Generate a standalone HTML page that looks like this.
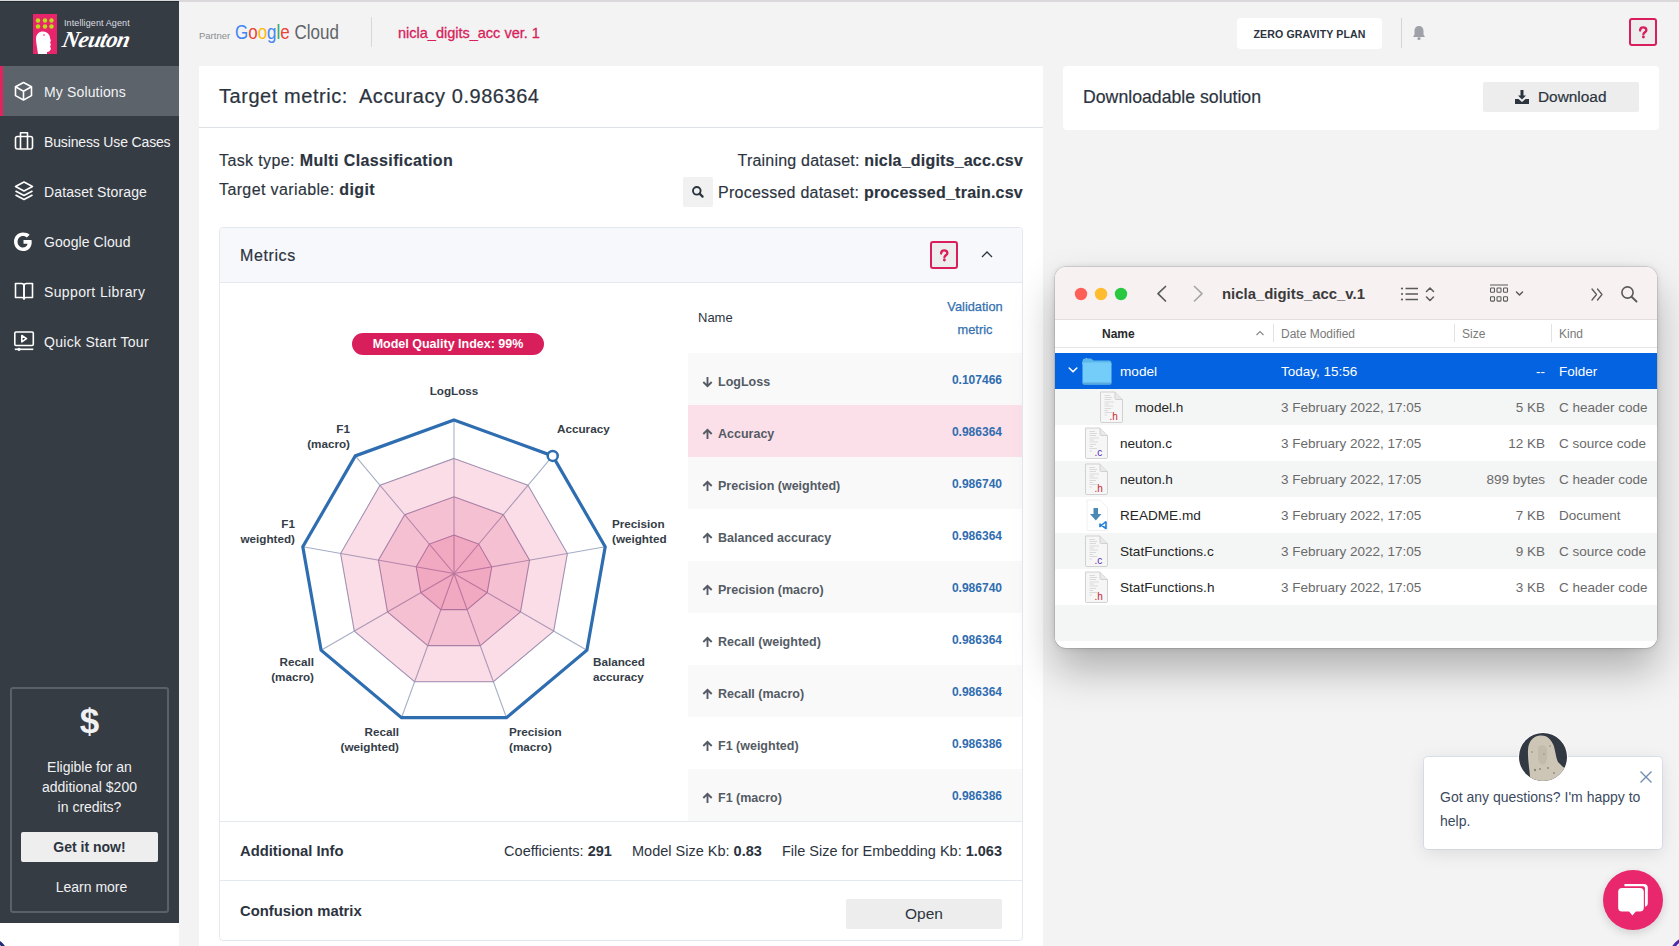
<!DOCTYPE html>
<html><head><meta charset="utf-8">
<style>
*{box-sizing:border-box;margin:0;padding:0}
html,body{width:1679px;height:946px;overflow:hidden;background:#f3f3f3;font-family:"Liberation Sans",sans-serif;color:#2c3440}
.a{position:absolute;white-space:nowrap}
#topstrip{left:0;top:0;width:1679px;height:2px;background:#dbd8dc}
#side{left:0;top:1px;width:179px;height:922px;background:#363c44;border-top:1px solid #222a32}
#sidebot{left:0;top:923px;width:179px;height:23px;background:#fff}
.nav{position:absolute;left:0;width:179px;height:50px;color:#f2f3f4;font-size:14px}
.nav .t{position:absolute;left:44px;top:17.5px;white-space:nowrap}
.nav svg{position:absolute;left:0;top:0}
.nav.act{background:#5c636b}
.nav.act:before{content:"";position:absolute;left:0;top:0;width:3px;height:50px;background:#e0245e}
#credit{left:10px;top:687px;width:159px;height:226px;border:2px solid #5b6168;border-radius:3px;color:#f0f1f2;text-align:center}
#card{left:199px;top:66px;width:844px;height:880px;background:#fff}
#card2{left:1063px;top:66px;width:596px;height:64px;background:#fff;border-radius:4px}
</style></head><body>
<div id="topstrip" class="a"></div>
<div id="side" class="a">
</div>
<div id="sidebot" class="a"></div>

<!-- logo -->
<div class="a" style="left:33px;top:14px;width:24px;height:40px;background:#e8246a"></div>
<svg class="a" style="left:33px;top:14px" width="24" height="40" viewBox="0 0 24 40">
  <g fill="#b7e01a">
    <circle cx="5" cy="6.5" r="2.2"/><circle cx="12" cy="6.5" r="2.2"/><circle cx="18.5" cy="6.5" r="2.2"/>
    <circle cx="5" cy="12.5" r="2.2"/><circle cx="12" cy="12.5" r="2.2"/><circle cx="18.5" cy="12.5" r="2.2"/>
  </g>
  <path d="M5 40 C4 33 3 28 3 25 C3 20 6 17.5 10 17.5 C14 17.5 17 20.5 17 24 L18 27 L17 28 L18 31 L17 32 L18 35 C17 37 16 38 14 38 L14 40 Z" fill="#fff"/>
  <circle cx="11" cy="21" r="0.8" fill="#e8246a"/>
</svg>
<div class="a" style="left:64px;top:18px;font-size:9px;color:#dcdde0;letter-spacing:0.1px">Intelligent Agent</div>
<div class="a" style="left:60px;top:27px;font-size:23px;color:#fff;font-family:'Liberation Serif',serif;font-style:italic;font-weight:bold;letter-spacing:-0.6px;transform:skewX(-12deg);transform-origin:0 100%">Neuton</div>

<!-- nav -->
<div class="nav act" style="top:66px">
  <svg width="40" height="50"><g fill="none" stroke="#fff" stroke-width="1.6" stroke-linejoin="round"><path d="M23.5 16.5 L31.5 20.8 L31.5 29.6 L23.5 34 L15.5 29.6 L15.5 20.8 Z"/><path d="M15.5 20.8 L23.5 25.2 L31.5 20.8 M23.5 25.2 L23.5 34"/></g></svg>
  <span class="t" style="letter-spacing:0.15px">My Solutions</span></div>
<div class="nav" style="top:116px">
  <svg width="40" height="50"><g fill="none" stroke="#fff" stroke-width="1.6" stroke-linejoin="round"><rect x="15.5" y="20.5" width="17" height="12.5" rx="2"/><path d="M20.5 20.5 V16.8 H27.5 V20.5 M20.5 20.5 V33 M27.5 20.5 V33"/></g></svg>
  <span class="t" style="letter-spacing:-0.15px">Business Use Cases</span></div>
<div class="nav" style="top:166px">
  <svg width="40" height="50"><g fill="none" stroke="#fff" stroke-width="1.6" stroke-linejoin="round"><path d="M15.5 20.5 L24 16 L32.5 20.5 L24 25 Z"/><path d="M15.5 25 L24 29.5 L32.5 25 M15.5 29 L24 33.5 L32.5 29"/></g></svg>
  <span class="t" style="letter-spacing:0.12px">Dataset Storage</span></div>
<div class="nav" style="top:216px">
  <svg width="40" height="50"><path d="M31.5 24 H23.5 V27.8 H27.6 C27 30.3 25.3 31.6 23 31.6 C19.8 31.6 17.6 29 17.6 25.8 C17.6 22.6 19.8 20.1 23 20.1 C24.6 20.1 25.9 20.7 26.9 21.6 L29.7 18.8 C28 17.3 25.8 16.5 23 16.5 C17.8 16.5 14 20.7 14 25.8 C14 30.9 17.8 35.1 23 35.1 C28.3 35.1 31.7 31.4 31.7 26.2 C31.7 25.4 31.6 24.7 31.5 24 Z" fill="#fff"/></svg>
  <span class="t" style="letter-spacing:0.08px">Google Cloud</span></div>
<div class="nav" style="top:266px">
  <svg width="40" height="50"><g fill="none" stroke="#fff" stroke-width="1.6" stroke-linejoin="round"><path d="M15.5 17.5 H21.5 C22.8 17.5 24 18.5 24 19.8 V33 C24 32 23 31.5 22 31.5 H15.5 Z"/><path d="M32.5 17.5 H26.5 C25.2 17.5 24 18.5 24 19.8 V33 C24 32 25 31.5 26 31.5 H32.5 Z"/></g></svg>
  <span class="t" style="letter-spacing:0.37px">Support Library</span></div>
<div class="nav" style="top:316px">
  <svg width="40" height="50"><g fill="none" stroke="#fff" stroke-width="1.6" stroke-linejoin="round"><rect x="14.8" y="16" width="18.5" height="13.5" rx="1.2"/><path d="M21.8 19.5 L26.5 22.7 L21.8 25.9 Z"/><path d="M14.8 33.3 H33.3"/></g><circle cx="19" cy="33.3" r="1.6" fill="#fff"/></svg>
  <span class="t" style="letter-spacing:0.3px">Quick Start Tour</span></div>

<!-- credits -->
<div id="credit" class="a">
  <div style="position:absolute;left:0;width:155px;top:14px;font-size:35px;font-weight:bold;line-height:36px">$</div>
  <div style="position:absolute;left:0;width:155px;top:68px;font-size:14px;line-height:20px">Eligible for an<br>additional $200<br>in credits?</div>
  <div style="position:absolute;left:9px;top:143px;width:137px;height:30px;background:#eeeeee;border-radius:2px;color:#2c3440;font-weight:bold;font-size:14px;line-height:30px">Get it now!</div>
  <div style="position:absolute;left:0;width:159px;top:188px;font-size:14px;line-height:20px">Learn more</div>
</div>

<!-- header -->
<div class="a" style="left:199px;top:30px;font-size:9.5px;color:#8a8d91">Partner</div>
<div class="a" style="left:235px;top:20px;font-size:19.5px;line-height:24px;transform:scaleX(0.87);transform-origin:0 0"><span style="color:#4285f4">G</span><span style="color:#ea4335">o</span><span style="color:#fbbc05">o</span><span style="color:#4285f4">g</span><span style="color:#34a853">l</span><span style="color:#ea4335">e</span> <span style="color:#5f6368">Cloud</span></div>
<div class="a" style="left:371px;top:17px;width:1px;height:30px;background:#d8d8d8"></div>
<div class="a" style="left:398px;top:25px;font-size:14.5px;color:#d81e5b;-webkit-text-stroke:0.3px #d81e5b">nicla_digits_acc ver. 1</div>

<div class="a" style="left:1237px;top:18px;width:145px;height:31px;background:#fff;border-radius:4px;font-size:10.6px;font-weight:bold;color:#2c3440;text-align:center;line-height:33px;letter-spacing:0.1px">ZERO GRAVITY PLAN</div>
<div class="a" style="left:1401px;top:18px;width:1px;height:30px;background:#d5d5d5"></div>
<svg class="a" style="left:1410px;top:24px" width="18" height="18" viewBox="0 0 18 18"><path d="M9 2 C6 2 4.5 4.3 4.5 7 V10.5 L3 13 H15 L13.5 10.5 V7 C13.5 4.3 12 2 9 2 Z" fill="#9ea2a8"/><circle cx="9" cy="14.5" r="1.6" fill="#9ea2a8"/></svg>
<div class="a" style="left:1629px;top:18px;width:28px;height:28px;border:2px solid #d81e5b;border-radius:3px;background:#ededed"><svg width="24" height="24" style="position:absolute;left:0;top:0"><g transform="translate(12,12.4) scale(0.8)"><path d="M-3.6 -2.3 C-3.6 -4.9 -1.9 -6.2 0.3 -6.2 C2.6 -6.2 4.2 -4.8 4.2 -2.8 C4.2 -0.5 0.7 0 0.5 2.3" fill="none" stroke="#d81e5b" stroke-width="2.9" stroke-linecap="round"/><circle cx="0.5" cy="5.8" r="1.8" fill="#d81e5b"/></g></svg></div>

<div id="card" class="a"></div>
<div id="card2" class="a">
  <div class="a" style="left:20px;top:21px;font-size:17.7px;color:#2c3440;-webkit-text-stroke:0.2px #2c3440">Downloadable solution</div>
  <div class="a" style="left:420px;top:16px;width:156px;height:30px;background:#ededed;border-radius:2px"></div>
  <svg class="a" style="left:450px;top:22px" width="18" height="18" viewBox="0 0 18 18"><path d="M7.5 2 H10.5 V7.5 H13 L9 11.5 L5 7.5 H7.5 Z" fill="#2c3440"/><path d="M2 11 H5.5 L9 14 L12.5 11 H16 V16 H2 Z" fill="#2c3440"/></svg>
  <div class="a" style="left:475px;top:22px;font-size:15.4px;color:#2c3440;-webkit-text-stroke:0.2px #2c3440">Download</div>
</div>

<!--MAIN-->
<div class="a" style="left:219px;top:86px;font-size:20px;line-height:20px;letter-spacing:0.55px;color:#2c3440;-webkit-text-stroke:0.2px #2c3440">Target metric:&nbsp; Accuracy 0.986364</div>
<div class="a" style="left:199px;top:127px;width:844px;height:1px;background:#dde1e6"></div>
<div class="a" style="left:219px;top:153px;font-size:16px;line-height:16px;letter-spacing:0.38px;-webkit-text-stroke:0.15px #2c3440">Task type: <b>Multi Classification</b></div>
<div class="a" style="left:219px;top:182px;font-size:16px;line-height:16px;letter-spacing:0.38px;-webkit-text-stroke:0.15px #2c3440">Target variable: <b>digit</b></div>
<div class="a" style="right:656px;top:153px;font-size:16px;line-height:16px;letter-spacing:0.2px;text-align:right;-webkit-text-stroke:0.15px #2c3440">Training dataset: <b>nicla_digits_acc.csv</b></div>
<div class="a" style="right:656px;top:185px;font-size:16px;line-height:16px;letter-spacing:0.23px;text-align:right;-webkit-text-stroke:0.15px #2c3440">Processed dataset: <b>processed_train.csv</b></div>
<div class="a" style="left:683px;top:177px;width:30px;height:30px;background:#f1f1f1;border-radius:2px"></div>
<svg class="a" style="left:683px;top:177px" width="30" height="30"><circle cx="13.8" cy="13.8" r="3.8" fill="none" stroke="#2c3440" stroke-width="1.9"/><path d="M16.6 16.6 L19.6 19.6" stroke="#2c3440" stroke-width="2.2" stroke-linecap="round"/></svg>
<div class="a" style="left:219px;top:227px;width:804px;height:714px;border:1px solid #e4e8ef;border-radius:4px;background:#fff"></div>
<div class="a" style="left:220px;top:228px;width:802px;height:55px;background:#f7f8fb;border-bottom:1px solid #e4e8ef;border-radius:3px 3px 0 0"></div>
<div class="a" style="left:240px;top:248px;font-size:16px;line-height:16px;letter-spacing:0.6px;-webkit-text-stroke:0.2px #2c3440">Metrics</div>
<div class="a" style="left:930px;top:240.5px;width:28px;height:28px;border:2px solid #d81e5b;border-radius:3px;background:#ededed"><svg width="24" height="24" style="position:absolute;left:0;top:0"><g transform="translate(12,12.4) scale(0.8)"><path d="M-3.6 -2.3 C-3.6 -4.9 -1.9 -6.2 0.3 -6.2 C2.6 -6.2 4.2 -4.8 4.2 -2.8 C4.2 -0.5 0.7 0 0.5 2.3" fill="none" stroke="#d81e5b" stroke-width="2.9" stroke-linecap="round"/><circle cx="0.5" cy="5.8" r="1.8" fill="#d81e5b"/></g></svg></div>
<svg class="a" style="left:979px;top:246px" width="16" height="16"><path d="M3 11 L8 6 L13 11" fill="none" stroke="#2c3440" stroke-width="1.3"/></svg>
<div class="a" style="left:352px;top:333px;width:192px;height:22px;background:#d81e5b;border-radius:11px;color:#fff;font-weight:bold;font-size:12.5px;line-height:22px;text-align:center">Model Quality Index: 99%</div>
<svg class="a" style="left:0;top:0" width="1043" height="946" viewBox="0 0 1043 946">
<polygon points="454.0,420.0 552.7,455.9 605.2,546.8 586.9,650.2 506.5,717.7 401.5,717.7 321.1,650.2 302.8,546.8 355.3,455.9" fill="none" stroke="#a3adc4" stroke-width="1.05"/>
<polygon points="454.0,458.4 528.0,485.3 567.4,553.5 553.7,631.1 493.4,681.7 414.6,681.7 354.3,631.1 340.6,553.5 380.0,485.3" fill="none" stroke="#a3adc4" stroke-width="1.05"/>
<polygon points="454.0,496.8 503.3,514.7 529.6,560.2 520.5,611.9 480.3,645.6 427.7,645.6 387.5,611.9 378.4,560.2 404.7,514.7" fill="none" stroke="#a3adc4" stroke-width="1.05"/>
<polygon points="454.0,535.1 478.7,544.1 491.8,566.8 487.2,592.7 467.1,609.6 440.9,609.6 420.8,592.7 416.2,566.8 429.3,544.1" fill="none" stroke="#a3adc4" stroke-width="1.05"/>
<line x1="454" y1="573.5" x2="454.0" y2="420.0" stroke="#a3adc4" stroke-width="1.05"/>
<line x1="454" y1="573.5" x2="552.7" y2="455.9" stroke="#a3adc4" stroke-width="1.05"/>
<line x1="454" y1="573.5" x2="605.2" y2="546.8" stroke="#a3adc4" stroke-width="1.05"/>
<line x1="454" y1="573.5" x2="586.9" y2="650.2" stroke="#a3adc4" stroke-width="1.05"/>
<line x1="454" y1="573.5" x2="506.5" y2="717.7" stroke="#a3adc4" stroke-width="1.05"/>
<line x1="454" y1="573.5" x2="401.5" y2="717.7" stroke="#a3adc4" stroke-width="1.05"/>
<line x1="454" y1="573.5" x2="321.1" y2="650.2" stroke="#a3adc4" stroke-width="1.05"/>
<line x1="454" y1="573.5" x2="302.8" y2="546.8" stroke="#a3adc4" stroke-width="1.05"/>
<line x1="454" y1="573.5" x2="355.3" y2="455.9" stroke="#a3adc4" stroke-width="1.05"/>
<polygon points="454.0,458.4 528.0,485.3 567.4,553.5 553.7,631.1 493.4,681.7 414.6,681.7 354.3,631.1 340.6,553.5 380.0,485.3" fill="rgba(222,40,105,0.155)" stroke="rgba(150,60,130,0.18)" stroke-width="1"/>
<polygon points="454.0,496.8 503.3,514.7 529.6,560.2 520.5,611.9 480.3,645.6 427.7,645.6 387.5,611.9 378.4,560.2 404.7,514.7" fill="rgba(222,40,105,0.155)" stroke="rgba(150,60,130,0.18)" stroke-width="1"/>
<polygon points="454.0,535.1 478.7,544.1 491.8,566.8 487.2,592.7 467.1,609.6 440.9,609.6 420.8,592.7 416.2,566.8 429.3,544.1" fill="rgba(222,40,105,0.155)" stroke="rgba(150,60,130,0.18)" stroke-width="1"/>
<polygon points="454.0,420.0 552.7,455.9 605.2,546.8 586.9,650.2 506.5,717.7 401.5,717.7 321.1,650.2 302.8,546.8 355.3,455.9" fill="none" stroke="#2e6db0" stroke-width="3.2" stroke-linejoin="miter"/>
<circle cx="552.7" cy="455.9" r="5" fill="#fff" stroke="#2e6db0" stroke-width="2.5"/>
</svg>
<div class="a" style="left:404px;width:100px;top:384px;text-align:center;font-size:11.7px;font-weight:bold;color:#353d48;line-height:14.5px">LogLoss</div>
<div class="a" style="left:557px;top:422px;font-size:11.7px;font-weight:bold;color:#353d48;line-height:14.5px">Accuracy</div>
<div class="a" style="left:612px;top:517px;font-size:11.7px;font-weight:bold;color:#353d48;line-height:14.5px">Precision<br>(weighted</div>
<div class="a" style="left:593px;top:655px;font-size:11.7px;font-weight:bold;color:#353d48;line-height:14.5px">Balanced<br>accuracy</div>
<div class="a" style="left:509px;top:725px;font-size:11.7px;font-weight:bold;color:#353d48;line-height:14.5px">Precision<br>(macro)</div>
<div class="a" style="right:1280px;top:725px;text-align:right;font-size:11.7px;font-weight:bold;color:#353d48;line-height:14.5px">Recall<br>(weighted)</div>
<div class="a" style="right:1365px;top:655px;text-align:right;font-size:11.7px;font-weight:bold;color:#353d48;line-height:14.5px">Recall<br>(macro)</div>
<div class="a" style="right:1384px;top:517px;text-align:right;font-size:11.7px;font-weight:bold;color:#353d48;line-height:14.5px">F1<br>weighted)</div>
<div class="a" style="right:1329px;top:422px;text-align:right;font-size:11.7px;font-weight:bold;color:#353d48;line-height:14.5px">F1<br>(macro)</div>
<div class="a" style="left:698px;top:311px;font-size:13px;line-height:13px;color:#2c3440">Name</div>
<div class="a" style="left:925px;width:100px;top:295px;font-size:12.8px;line-height:23px;color:#3470b0;text-align:center;-webkit-text-stroke:0.25px #3470b0">Validation<br>metric</div>
<div class="a" style="left:688px;top:353px;width:334px;height:52px;background:#f9f9fa"></div>
<div class="a" style="left:718px;top:375px;font-size:12.5px;line-height:14px;font-weight:bold;color:#545b64"><svg width="11" height="12" style="position:absolute;left:-16px;top:1px"><path d="M5.5 1 V10.2 M1.3 6 L5.5 10.2 L9.7 6" fill="none" stroke="#545b64" stroke-width="1.9" stroke-linejoin="miter"/></svg>LogLoss</div>
<div class="a" style="right:677px;top:373px;font-size:12px;line-height:14px;font-weight:bold;color:#2f6db0">0.107466</div>
<div class="a" style="left:688px;top:405px;width:334px;height:52px;background:#fce0e9"></div>
<div class="a" style="left:718px;top:427px;font-size:12.5px;line-height:14px;font-weight:bold;color:#545b64"><svg width="11" height="12" style="position:absolute;left:-16px;top:1px"><path d="M5.5 11 V1.8 M1.3 6 L5.5 1.8 L9.7 6" fill="none" stroke="#545b64" stroke-width="1.9" stroke-linejoin="miter"/></svg>Accuracy</div>
<div class="a" style="right:677px;top:425px;font-size:12px;line-height:14px;font-weight:bold;color:#2f6db0">0.986364</div>
<div class="a" style="left:688px;top:457px;width:334px;height:52px;background:#f9f9fa"></div>
<div class="a" style="left:718px;top:479px;font-size:12.5px;line-height:14px;font-weight:bold;color:#545b64"><svg width="11" height="12" style="position:absolute;left:-16px;top:1px"><path d="M5.5 11 V1.8 M1.3 6 L5.5 1.8 L9.7 6" fill="none" stroke="#545b64" stroke-width="1.9" stroke-linejoin="miter"/></svg>Precision (weighted)</div>
<div class="a" style="right:677px;top:477px;font-size:12px;line-height:14px;font-weight:bold;color:#2f6db0">0.986740</div>
<div class="a" style="left:688px;top:509px;width:334px;height:52px;background:#ffffff"></div>
<div class="a" style="left:718px;top:531px;font-size:12.5px;line-height:14px;font-weight:bold;color:#545b64"><svg width="11" height="12" style="position:absolute;left:-16px;top:1px"><path d="M5.5 11 V1.8 M1.3 6 L5.5 1.8 L9.7 6" fill="none" stroke="#545b64" stroke-width="1.9" stroke-linejoin="miter"/></svg>Balanced accuracy</div>
<div class="a" style="right:677px;top:529px;font-size:12px;line-height:14px;font-weight:bold;color:#2f6db0">0.986364</div>
<div class="a" style="left:688px;top:561px;width:334px;height:52px;background:#f9f9fa"></div>
<div class="a" style="left:718px;top:583px;font-size:12.5px;line-height:14px;font-weight:bold;color:#545b64"><svg width="11" height="12" style="position:absolute;left:-16px;top:1px"><path d="M5.5 11 V1.8 M1.3 6 L5.5 1.8 L9.7 6" fill="none" stroke="#545b64" stroke-width="1.9" stroke-linejoin="miter"/></svg>Precision (macro)</div>
<div class="a" style="right:677px;top:581px;font-size:12px;line-height:14px;font-weight:bold;color:#2f6db0">0.986740</div>
<div class="a" style="left:688px;top:613px;width:334px;height:52px;background:#ffffff"></div>
<div class="a" style="left:718px;top:635px;font-size:12.5px;line-height:14px;font-weight:bold;color:#545b64"><svg width="11" height="12" style="position:absolute;left:-16px;top:1px"><path d="M5.5 11 V1.8 M1.3 6 L5.5 1.8 L9.7 6" fill="none" stroke="#545b64" stroke-width="1.9" stroke-linejoin="miter"/></svg>Recall (weighted)</div>
<div class="a" style="right:677px;top:633px;font-size:12px;line-height:14px;font-weight:bold;color:#2f6db0">0.986364</div>
<div class="a" style="left:688px;top:665px;width:334px;height:52px;background:#f9f9fa"></div>
<div class="a" style="left:718px;top:687px;font-size:12.5px;line-height:14px;font-weight:bold;color:#545b64"><svg width="11" height="12" style="position:absolute;left:-16px;top:1px"><path d="M5.5 11 V1.8 M1.3 6 L5.5 1.8 L9.7 6" fill="none" stroke="#545b64" stroke-width="1.9" stroke-linejoin="miter"/></svg>Recall (macro)</div>
<div class="a" style="right:677px;top:685px;font-size:12px;line-height:14px;font-weight:bold;color:#2f6db0">0.986364</div>
<div class="a" style="left:688px;top:717px;width:334px;height:52px;background:#ffffff"></div>
<div class="a" style="left:718px;top:739px;font-size:12.5px;line-height:14px;font-weight:bold;color:#545b64"><svg width="11" height="12" style="position:absolute;left:-16px;top:1px"><path d="M5.5 11 V1.8 M1.3 6 L5.5 1.8 L9.7 6" fill="none" stroke="#545b64" stroke-width="1.9" stroke-linejoin="miter"/></svg>F1 (weighted)</div>
<div class="a" style="right:677px;top:737px;font-size:12px;line-height:14px;font-weight:bold;color:#2f6db0">0.986386</div>
<div class="a" style="left:688px;top:769px;width:334px;height:52px;background:#f9f9fa"></div>
<div class="a" style="left:718px;top:791px;font-size:12.5px;line-height:14px;font-weight:bold;color:#545b64"><svg width="11" height="12" style="position:absolute;left:-16px;top:1px"><path d="M5.5 11 V1.8 M1.3 6 L5.5 1.8 L9.7 6" fill="none" stroke="#545b64" stroke-width="1.9" stroke-linejoin="miter"/></svg>F1 (macro)</div>
<div class="a" style="right:677px;top:789px;font-size:12px;line-height:14px;font-weight:bold;color:#2f6db0">0.986386</div>
<div class="a" style="left:220px;top:821px;width:802px;height:1px;background:#e4e8ef"></div>
<div class="a" style="left:220px;top:880px;width:802px;height:1px;background:#e4e8ef"></div>
<div class="a" style="left:240px;top:843px;font-size:14.8px;line-height:16px;font-weight:bold">Additional Info</div>
<div class="a" style="right:677px;top:843px;font-size:14.5px;line-height:16px;word-spacing:0px">Coefficients: <b>291</b>&nbsp;&nbsp;&nbsp;&nbsp; Model Size Kb: <b>0.83</b>&nbsp;&nbsp;&nbsp;&nbsp; File Size for Embedding Kb: <b>1.063</b></div>
<div class="a" style="left:240px;top:903px;font-size:14.8px;line-height:16px;font-weight:bold">Confusion matrix</div>
<div class="a" style="left:846px;top:899px;width:156px;height:30px;background:#ededed;border-radius:2px;font-size:15.5px;line-height:30px;text-align:center">Open</div>
<!--FINDER-->
<div class="a" style="left:1055px;top:267px;width:602px;height:381px;border-radius:11px;background:#fff;box-shadow:0 0 0 0.5px rgba(0,0,0,0.2),0 0 6px rgba(0,0,0,0.12),0 22px 40px rgba(0,0,0,0.28);overflow:hidden">
<div class="a" style="left:0;top:0;width:602px;height:53px;background:#f7f1f2;border-bottom:1px solid #e3dfe0"></div>
<svg class="a" style="left:0;top:0" width="602" height="53"><circle cx="26" cy="27" r="6.2" fill="#fe5f57"/><circle cx="46" cy="27" r="6.2" fill="#febc2e"/><circle cx="66" cy="27" r="6.2" fill="#28c840"/><path d="M110.5 19.5 L103 26.7 L110.5 34" fill="none" stroke="#5a5a5a" stroke-width="1.7" stroke-linecap="round" stroke-linejoin="round"/><path d="M139.5 19.5 L147 26.7 L139.5 34" fill="none" stroke="#a8a8a8" stroke-width="1.7" stroke-linecap="round" stroke-linejoin="round"/><g fill="#5a5a5a"><circle cx="347" cy="21.5" r="1.1"/><circle cx="347" cy="27" r="1.1"/><circle cx="347" cy="32.5" r="1.1"/></g><path d="M350.5 21.5 H363 M350.5 27 H363 M350.5 32.5 H363" stroke="#5a5a5a" stroke-width="1.4"/><path d="M371.5 24.5 L375 21 L378.5 24.5 M371.5 30 L375 33.5 L378.5 30" fill="none" stroke="#5a5a5a" stroke-width="1.5" stroke-linecap="round" stroke-linejoin="round"/><path d="M435 18 H453" stroke="#5a5a5a" stroke-width="1.2"/><g fill="none" stroke="#5a5a5a" stroke-width="1.1"><rect x="435.5" y="21" width="4" height="4.3" rx="0.8"/><rect x="442" y="21" width="4" height="4.3" rx="0.8"/><rect x="448.5" y="21" width="4" height="4.3" rx="0.8"/><rect x="435.5" y="29.8" width="4" height="4.3" rx="0.8"/><rect x="442" y="29.8" width="4" height="4.3" rx="0.8"/><rect x="448.5" y="29.8" width="4" height="4.3" rx="0.8"/></g><path d="M461.5 25 L464.5 28 L467.5 25" fill="none" stroke="#5a5a5a" stroke-width="1.5" stroke-linecap="round" stroke-linejoin="round"/><path d="M537 22 L541.5 27.5 L537 33 M542.5 22 L547 27.5 L542.5 33" fill="none" stroke="#5a5a5a" stroke-width="1.3" stroke-linecap="round" stroke-linejoin="round"/><circle cx="572.5" cy="25.5" r="5.6" fill="none" stroke="#5a5a5a" stroke-width="1.6"/><path d="M576.6 29.8 L581.5 34.5" stroke="#5a5a5a" stroke-width="1.9" stroke-linecap="round"/></svg>
<div class="a" style="left:167px;top:19px;font-size:14.9px;font-weight:bold;color:#3b3b3b;line-height:16px">nicla_digits_acc_v.1</div>
<div class="a" style="left:0;top:80px;width:602px;height:1px;background:#e6e6e6"></div>
<div class="a" style="left:47px;top:60px;font-size:12px;font-weight:bold;color:#2a2a2a;line-height:14px">Name</div>
<svg class="a" style="left:199px;top:61px" width="12" height="10"><path d="M2.5 7 L6 3.5 L9.5 7" fill="none" stroke="#8a8a8a" stroke-width="1.2"/></svg>
<div class="a" style="left:218px;top:57px;width:1px;height:18px;background:#e2e2e2"></div>
<div class="a" style="left:399px;top:57px;width:1px;height:18px;background:#e2e2e2"></div>
<div class="a" style="left:496px;top:57px;width:1px;height:18px;background:#e2e2e2"></div>
<div class="a" style="left:226px;top:60px;font-size:12px;color:#7a7a7a;line-height:14px">Date Modified</div>
<div class="a" style="left:407px;top:60px;font-size:12px;color:#7a7a7a;line-height:14px">Size</div>
<div class="a" style="left:504px;top:60px;font-size:12px;color:#7a7a7a;line-height:14px">Kind</div>
<div class="a" style="left:0;top:86px;width:602px;height:36px;background:#0463e0"></div>
<svg class="a" style="left:14px;top:86px" width="60" height="36"><path d="M14 10 L17.5 6 L17.5 6" fill="none" stroke="#fff" stroke-width="1.6" stroke-linecap="round" stroke-linejoin="round" transform="translate(0,0)"/></svg>
<svg class="a" style="left:0;top:86px" width="60" height="36"><path d="M14.2 15 L18 18.8 L21.8 15" fill="none" stroke="#fff" stroke-width="1.6" stroke-linecap="round" stroke-linejoin="round"/><path d="M27.5 8 Q27.5 5.5 30 5.5 H36 L38.5 7.5 H54 Q56.5 7.5 56.5 10 V12 H27.5 Z" fill="#5bb6ea"/><rect x="27.5" y="9.5" width="29" height="22" rx="2.2" fill="#74cdf9"/><rect x="27.5" y="29.5" width="29" height="2" rx="1" fill="#5aa9de"/></svg>
<div class="a" style="left:65px;top:97px;font-size:13.6px;color:#fff;line-height:16px">model</div>
<div class="a" style="left:226px;top:97px;font-size:13.5px;color:#fff;line-height:16px">Today, 15:56</div>
<div class="a" style="right:112px;top:97px;font-size:13.5px;color:#fff;line-height:16px;text-align:right">--</div>
<div class="a" style="left:504px;top:97px;font-size:13.5px;color:#fff;line-height:16px">Folder</div>
<div class="a" style="left:0;top:122px;width:602px;height:36px;background:#f4f5f5"></div>
<svg class="a" style="left:44px;top:122px" width="30" height="36"><path d="M1.5 3 H16 L23.5 10.5 V32.2 Q23.5 33.5 22.2 33.5 H2.8 Q1.5 33.5 1.5 32.2 Z" fill="#f6f6f6" stroke="#cdcdcd" stroke-width="0.9"/><path d="M16 3 V9.3 Q16 10.5 17.2 10.5 H23.5" fill="#e9e9e9" stroke="#cdcdcd" stroke-width="0.9"/><g stroke="#cfcfcf" stroke-width="0.7"><path d="M5.5 6.5 H11 M5.5 8.5 H13 M5.5 10.5 H12 M5.5 13 H15 M5.5 15 H10 M5.5 17 H14 M5.5 19.5 H12 M5.5 21.5 H9 M5.5 23.5 H13 M5.5 26 H8"/></g><text x="10.5" y="30.5" font-family="Liberation Sans" font-size="10" font-weight="normal" fill="#c9252f">.h</text></svg>
<div class="a" style="left:80px;top:133px;font-size:13.6px;color:#262626;line-height:16px">model.h</div>
<div class="a" style="left:226px;top:133px;font-size:13.5px;color:#6a6a6a;line-height:16px">3 February 2022, 17:05</div>
<div class="a" style="right:112px;top:133px;font-size:13.5px;color:#6a6a6a;line-height:16px;text-align:right">5 KB</div>
<div class="a" style="left:504px;top:133px;font-size:13.5px;color:#6a6a6a;line-height:16px">C header code</div>
<div class="a" style="left:0;top:158px;width:602px;height:36px;background:#ffffff"></div>
<svg class="a" style="left:29px;top:158px" width="30" height="36"><path d="M1.5 3 H16 L23.5 10.5 V32.2 Q23.5 33.5 22.2 33.5 H2.8 Q1.5 33.5 1.5 32.2 Z" fill="#f6f6f6" stroke="#cdcdcd" stroke-width="0.9"/><path d="M16 3 V9.3 Q16 10.5 17.2 10.5 H23.5" fill="#e9e9e9" stroke="#cdcdcd" stroke-width="0.9"/><g stroke="#cfcfcf" stroke-width="0.7"><path d="M5.5 6.5 H11 M5.5 8.5 H13 M5.5 10.5 H12 M5.5 13 H15 M5.5 15 H10 M5.5 17 H14 M5.5 19.5 H12 M5.5 21.5 H9 M5.5 23.5 H13 M5.5 26 H8"/></g><text x="10.5" y="30.5" font-family="Liberation Sans" font-size="10" font-weight="normal" fill="#5b2fb5">.c</text></svg>
<div class="a" style="left:65px;top:169px;font-size:13.6px;color:#262626;line-height:16px">neuton.c</div>
<div class="a" style="left:226px;top:169px;font-size:13.5px;color:#6a6a6a;line-height:16px">3 February 2022, 17:05</div>
<div class="a" style="right:112px;top:169px;font-size:13.5px;color:#6a6a6a;line-height:16px;text-align:right">12 KB</div>
<div class="a" style="left:504px;top:169px;font-size:13.5px;color:#6a6a6a;line-height:16px">C source code</div>
<div class="a" style="left:0;top:194px;width:602px;height:36px;background:#f4f5f5"></div>
<svg class="a" style="left:29px;top:194px" width="30" height="36"><path d="M1.5 3 H16 L23.5 10.5 V32.2 Q23.5 33.5 22.2 33.5 H2.8 Q1.5 33.5 1.5 32.2 Z" fill="#f6f6f6" stroke="#cdcdcd" stroke-width="0.9"/><path d="M16 3 V9.3 Q16 10.5 17.2 10.5 H23.5" fill="#e9e9e9" stroke="#cdcdcd" stroke-width="0.9"/><g stroke="#cfcfcf" stroke-width="0.7"><path d="M5.5 6.5 H11 M5.5 8.5 H13 M5.5 10.5 H12 M5.5 13 H15 M5.5 15 H10 M5.5 17 H14 M5.5 19.5 H12 M5.5 21.5 H9 M5.5 23.5 H13 M5.5 26 H8"/></g><text x="10.5" y="30.5" font-family="Liberation Sans" font-size="10" font-weight="normal" fill="#c9252f">.h</text></svg>
<div class="a" style="left:65px;top:205px;font-size:13.6px;color:#262626;line-height:16px">neuton.h</div>
<div class="a" style="left:226px;top:205px;font-size:13.5px;color:#6a6a6a;line-height:16px">3 February 2022, 17:05</div>
<div class="a" style="right:112px;top:205px;font-size:13.5px;color:#6a6a6a;line-height:16px;text-align:right">899 bytes</div>
<div class="a" style="left:504px;top:205px;font-size:13.5px;color:#6a6a6a;line-height:16px">C header code</div>
<div class="a" style="left:0;top:230px;width:602px;height:36px;background:#ffffff"></div>
<svg class="a" style="left:29px;top:230px" width="30" height="36"><path d="M3 3 H16 L23.5 10.5 V33.5 H3 Z" fill="#fff" stroke="#ececec" stroke-width="0.8"/><path d="M9.5 11 H14 V17 H17.5 L11.8 23.5 L6 17 H9.5 Z" fill="#4a8ab5"/><path d="M22 24.5 V31.5 L15.5 26.8 M22 24.5 L15.5 30 M16 26.5 V30" fill="none" stroke="#1f7fd8" stroke-width="1.6" stroke-linejoin="round"/></svg>
<div class="a" style="left:65px;top:241px;font-size:13.6px;color:#262626;line-height:16px">README.md</div>
<div class="a" style="left:226px;top:241px;font-size:13.5px;color:#6a6a6a;line-height:16px">3 February 2022, 17:05</div>
<div class="a" style="right:112px;top:241px;font-size:13.5px;color:#6a6a6a;line-height:16px;text-align:right">7 KB</div>
<div class="a" style="left:504px;top:241px;font-size:13.5px;color:#6a6a6a;line-height:16px">Document</div>
<div class="a" style="left:0;top:266px;width:602px;height:36px;background:#f4f5f5"></div>
<svg class="a" style="left:29px;top:266px" width="30" height="36"><path d="M1.5 3 H16 L23.5 10.5 V32.2 Q23.5 33.5 22.2 33.5 H2.8 Q1.5 33.5 1.5 32.2 Z" fill="#f6f6f6" stroke="#cdcdcd" stroke-width="0.9"/><path d="M16 3 V9.3 Q16 10.5 17.2 10.5 H23.5" fill="#e9e9e9" stroke="#cdcdcd" stroke-width="0.9"/><g stroke="#cfcfcf" stroke-width="0.7"><path d="M5.5 6.5 H11 M5.5 8.5 H13 M5.5 10.5 H12 M5.5 13 H15 M5.5 15 H10 M5.5 17 H14 M5.5 19.5 H12 M5.5 21.5 H9 M5.5 23.5 H13 M5.5 26 H8"/></g><text x="10.5" y="30.5" font-family="Liberation Sans" font-size="10" font-weight="normal" fill="#5b2fb5">.c</text></svg>
<div class="a" style="left:65px;top:277px;font-size:13.6px;color:#262626;line-height:16px">StatFunctions.c</div>
<div class="a" style="left:226px;top:277px;font-size:13.5px;color:#6a6a6a;line-height:16px">3 February 2022, 17:05</div>
<div class="a" style="right:112px;top:277px;font-size:13.5px;color:#6a6a6a;line-height:16px;text-align:right">9 KB</div>
<div class="a" style="left:504px;top:277px;font-size:13.5px;color:#6a6a6a;line-height:16px">C source code</div>
<div class="a" style="left:0;top:302px;width:602px;height:36px;background:#ffffff"></div>
<svg class="a" style="left:29px;top:302px" width="30" height="36"><path d="M1.5 3 H16 L23.5 10.5 V32.2 Q23.5 33.5 22.2 33.5 H2.8 Q1.5 33.5 1.5 32.2 Z" fill="#f6f6f6" stroke="#cdcdcd" stroke-width="0.9"/><path d="M16 3 V9.3 Q16 10.5 17.2 10.5 H23.5" fill="#e9e9e9" stroke="#cdcdcd" stroke-width="0.9"/><g stroke="#cfcfcf" stroke-width="0.7"><path d="M5.5 6.5 H11 M5.5 8.5 H13 M5.5 10.5 H12 M5.5 13 H15 M5.5 15 H10 M5.5 17 H14 M5.5 19.5 H12 M5.5 21.5 H9 M5.5 23.5 H13 M5.5 26 H8"/></g><text x="10.5" y="30.5" font-family="Liberation Sans" font-size="10" font-weight="normal" fill="#c9252f">.h</text></svg>
<div class="a" style="left:65px;top:313px;font-size:13.6px;color:#262626;line-height:16px">StatFunctions.h</div>
<div class="a" style="left:226px;top:313px;font-size:13.5px;color:#6a6a6a;line-height:16px">3 February 2022, 17:05</div>
<div class="a" style="right:112px;top:313px;font-size:13.5px;color:#6a6a6a;line-height:16px;text-align:right">3 KB</div>
<div class="a" style="left:504px;top:313px;font-size:13.5px;color:#6a6a6a;line-height:16px">C header code</div>
<div class="a" style="left:0;top:338px;width:602px;height:36px;background:#f4f5f5"></div>
</div>
<div class="a" style="left:-40px;top:936px;width:50px;height:50px;border-radius:50%;border:3px solid #1f2a7a"></div>
<div class="a" style="left:1668px;top:935px;width:50px;height:50px;border-radius:50%;border:3px solid #4b2aa8"></div>
<!--CHAT-->
<div class="a" style="left:1424px;top:757px;width:238px;height:92px;background:#fff;border-radius:4px;box-shadow:0 4px 18px rgba(0,0,0,0.10),0 0 0 1px rgba(210,220,235,0.6)"></div>
<svg class="a" style="left:1518px;top:732px" width="50" height="50"><defs><clipPath id="avc"><circle cx="25" cy="25" r="24"/></clipPath></defs><circle cx="25" cy="25" r="24.8" fill="#fff"/><circle cx="25" cy="25" r="24" fill="#323943"/><g clip-path="url(#avc)"><path d="M12.5 50 C12 40 9.5 28 10 18 C10.5 10 14 4.5 22 3.5 C30 3 33 8 35.5 13 C37.5 19 38 26 40 30 C43 33 46 36 49 38 L46 50 Z" fill="#cdc6b6"/><path d="M20 15 C23 12 28 13 29 17 C30 23 29 29 27 32 C24 34 21 32 20 27 Z" fill="#c2bba9"/><g fill="#8d877a"><circle cx="17" cy="38" r="1.2"/><circle cx="22" cy="37" r="0.9"/><circle cx="30" cy="36" r="1"/><circle cx="26" cy="22" r="0.7"/><circle cx="32" cy="14" r="0.8"/><circle cx="14" cy="20" r="0.8"/><circle cx="36" cy="41" r="0.9"/></g></g></svg>
<svg class="a" style="left:1638px;top:769px" width="16" height="16"><path d="M2.5 2.5 L13.5 13.5 M13.5 2.5 L2.5 13.5" stroke="#6f8db0" stroke-width="1.4"/></svg>
<div class="a" style="left:1440px;top:785px;font-size:14px;line-height:24px;color:#3b4a5e;white-space:normal;width:215px">Got any questions? I'm happy to help.</div>
<div class="a" style="left:1603px;top:870px;width:60px;height:60px;border-radius:50%;background:#e8276c;box-shadow:0 3px 10px rgba(0,0,0,0.15)"></div>
<svg class="a" style="left:1603px;top:870px" width="60" height="60"><g transform="translate(30,30) scale(1.14) translate(-30.5,-28.5)"><path d="M23 14.5 H40 C42.5 14.5 43.5 15.5 43.5 18 V31 C43.5 33 42.8 34 41 34.5 V18.5 C41 17 40 16.5 38.5 16.5 H23 Z" fill="#fff"/><path d="M21 18 H36.5 C39 18 40 19 40 21.5 V35 C40 37.5 39 38.5 36.5 38.5 H33 L30 42 L27 38.5 H21 C18.5 38.5 17.5 37.5 17.5 35 V21.5 C17.5 19 18.5 18 21 18 Z" fill="#fff"/></g></svg>
</body></html>
